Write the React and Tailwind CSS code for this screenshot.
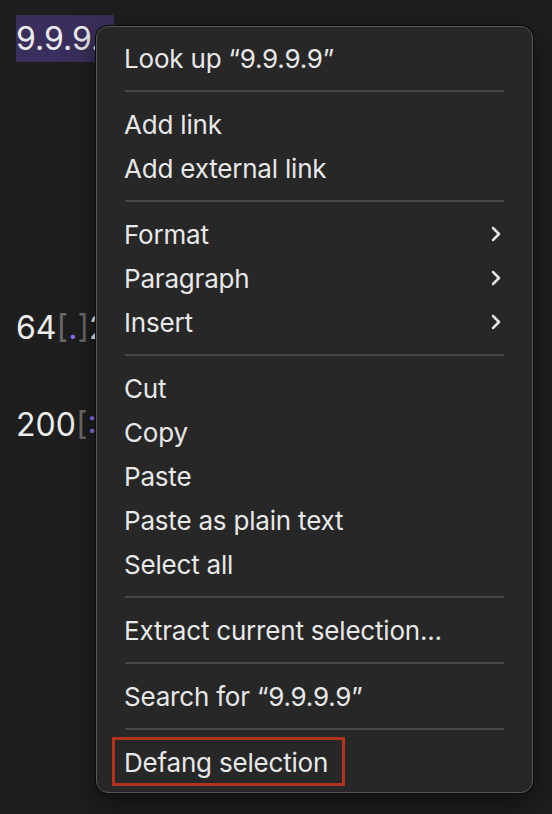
import React from 'react';

const font = { fontFamily: 'Inter, "Liberation Sans", sans-serif' };

function Chevron() {
  return (
    <svg width="12" height="18" viewBox="0 0 12 18" className="mr-[2px]">
      <path d="M3 3 L9 9 L3 15" fill="none" stroke="#e6e6e6" strokeWidth="2.5" strokeLinecap="round" strokeLinejoin="round" />
    </svg>
  );
}

function Item({ label, sub, children }) {
  return (
    <div className="relative h-[44px] flex items-center justify-between pl-[27px] pr-[28px] text-[26px] text-[#e8e8e8] tracking-[-0.2px]">
      <span>{label}</span>
      {sub && <Chevron />}
      {children}
    </div>
  );
}

function Sep() {
  return (
    <div className="h-[22px] flex items-center px-[28px]">
      <div className="h-[2px] w-full bg-[#474747]" />
    </div>
  );
}

export default function App() {
  return (
    <div className="relative w-[552px] h-[814px] bg-[#1e1e1e] overflow-hidden" style={font}>
      <div className="pl-[16px] pt-[15px] text-[32px] text-[#ececec]">
        <div className="h-[47px] leading-[47px] whitespace-nowrap bg-[linear-gradient(#3a2f5c,#3a2f5c)] bg-no-repeat bg-[length:98px_47px]">9.9.9.9</div>
        <div className="mt-[246px] leading-[40px]">
          64<span className="text-[#6a6a6a]">[</span><span className="text-[#8c6ff0]">.</span><span className="text-[#6a6a6a]">]</span>2
        </div>
        <div className="mt-[57px] leading-[40px]">
          200<span className="text-[#6a6a6a]">[</span><span className="text-[#8c6ff0]">:</span>
        </div>
      </div>

      <div className="absolute left-[96px] top-[26px] w-[437px] h-[767px] rounded-[12px] bg-[#272727] border border-[#585858] shadow-[0_0_0_1px_#0a0a0a,0_10px_30px_rgba(0,0,0,0.5)] pt-[9px]">
        <Item label="Look up “9.9.9.9”" />
        <Sep />
        <Item label="Add link" />
        <Item label="Add external link" />
        <Sep />
        <Item label="Format" sub />
        <Item label="Paragraph" sub />
        <Item label="Insert" sub />
        <Sep />
        <Item label="Cut" />
        <Item label="Copy" />
        <Item label="Paste" />
        <Item label="Paste as plain text" />
        <Item label="Select all" />
        <Sep />
        <Item label="Extract current selection..." />
        <Sep />
        <Item label="Search for “9.9.9.9”" />
        <Sep />
        <Item label="Defang selection">
          <div className="absolute left-[15px] top-[-3px] w-[233px] h-[49px] border-[3px] border-[#b3321b]" />
        </Item>
      </div>
    </div>
  );
}
